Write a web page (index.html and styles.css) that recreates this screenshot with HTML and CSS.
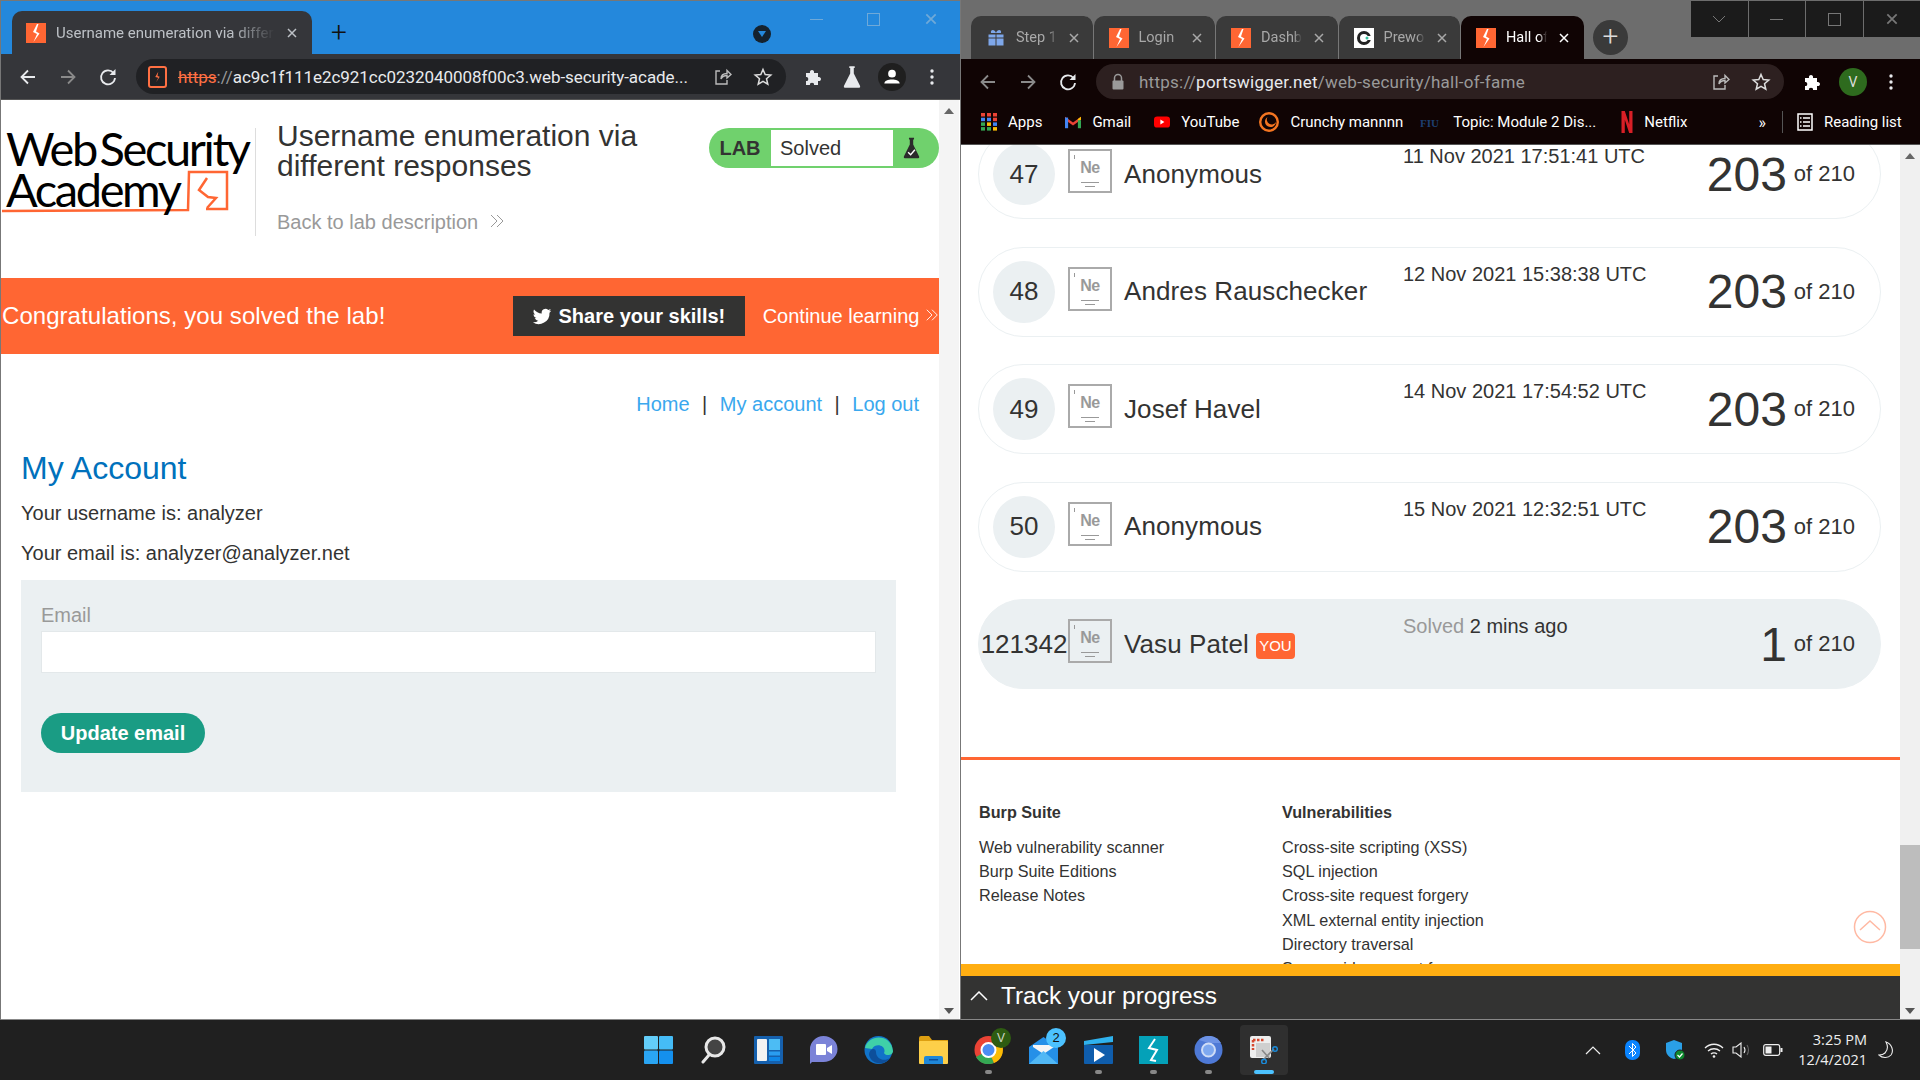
FILE: index.html
```html
<!DOCTYPE html>
<html lang="en">
<head>
    <meta charset="UTF-8">
    <title>Hall of Fame</title>
    <link rel="stylesheet" href="styles.css">
</head>
<body>
    <svg class="defs" width="0" height="0">
        <symbol id="burp" viewBox="0 0 20 20"><rect width="20" height="20" fill="#ff6633"/><path d="M11 1 L7 9 L11 11 L7.5 19 L13.5 10.5 L10 8.5 L12.5 1z" fill="#fff"/></symbol>
        <symbol id="star" viewBox="0 0 20 20"><path d="M10 2.5 L12.2 7.6 L17.8 8.1 L13.5 11.8 L14.8 17.2 L10 14.4 L5.2 17.2 L6.5 11.8 L2.2 8.1 L7.8 7.6z" fill="none" stroke="currentColor" stroke-width="1.5"/></symbol>
        <symbol id="share" viewBox="0 0 20 20"><path d="M8 4 H4 V17 H15 V13 M9 12 C9 8 12 6.500 15 6.500 V3.500 L19 7.500 L15 11 V8.500 C12 8.500 10 10 9 12z" fill="none" stroke="currentColor" stroke-width="1.400"/></symbol>
        <symbol id="puzzle" viewBox="0 0 20 20"><path d="M3 6 H7 C6 2 12 2 11 6 H15 V10 C19 9 19 15 15 14 V18 H11 C12 15 6 15 7 18 H3 V14 C6 15 6 9 3 10z" fill="currentColor"/></symbol>
        <symbol id="back" viewBox="0 0 20 20"><path d="M17 10 H4 M10 3.500 L3.500 10 L10 16.500" fill="none" stroke="currentColor" stroke-width="1.800"/></symbol>
        <symbol id="fwd" viewBox="0 0 20 20"><path d="M3 10 H16 M10 3.500 L16.500 10 L10 16.500" fill="none" stroke="currentColor" stroke-width="1.800"/></symbol>
        <symbol id="reload" viewBox="0 0 20 20"><path d="M15.500 6 A7 7 0 1 0 17 11" fill="none" stroke="currentColor" stroke-width="1.800"/><path d="M17.500 2 V8 H11.500z" fill="currentColor"/></symbol>
        <symbol id="dots" viewBox="0 0 20 20"><circle cx="10" cy="4" r="1.700" fill="currentColor"/><circle cx="10" cy="10" r="1.700" fill="currentColor"/><circle cx="10" cy="16" r="1.700" fill="currentColor"/></symbol>
        <symbol id="xmark" viewBox="0 0 12 12"><path d="M2 2 L10 10 M10 2 L2 10" fill="none" stroke="currentColor" stroke-width="1.500"/></symbol>
        <symbol id="chev2" viewBox="0 0 16 16"><path d="M2 2 L8 8 L2 14 M8 2 L14 8 L8 14" fill="none" stroke="currentColor" stroke-width="1"/></symbol>
        <symbol id="flask" viewBox="0 0 20 26"><path d="M7 1 H13 V3 H12 V9 L19 23 Q19.500 25 18 25 H2 Q0.500 25 1 23 L8 9 V3 H7z" fill="currentColor"/></symbol>
    </svg>

    <div class="desktop">
        <!-- left window -->
        <section class="window window-left">
            <div class="tabstrip tabstrip-left">
                <div class="tab tab-main">
                    <svg class="fav"><use href="#burp"/></svg>
                    <span class="tab-title">Username enumeration via differ</span>
                    <svg class="tab-x"><use href="#xmark"/></svg>
                </div>
                <span class="newtab-plain">+</span>
                <span class="profile-drop"><i></i></span>
                <div class="winctl winctl-left">
                    <span class="ctl-min"></span>
                    <span class="ctl-max"></span>
                    <svg class="ctl-x"><use href="#xmark"/></svg>
                </div>
            </div>
            <div class="toolbar toolbar-left">
                <svg class="tb-icon"><use href="#back"/></svg>
                <svg class="tb-icon dim"><use href="#fwd"/></svg>
                <svg class="tb-icon"><use href="#reload"/></svg>
                <div class="omnibox omnibox-left">
                    <span class="warn-box"><svg viewBox="0 0 20 20"><path d="M11 3 L7 10 L11 11 L8 17 L13 9.500 L10 8.500z" fill="#ff7043"/></svg></span>
                    <span class="url"><s class="url-bad">https</s><span class="dim-text">://</span>ac9c1f111e2c921cc0232040008f00c3.web-security-acade...</span>
                    <svg class="tb-icon omni-share"><use href="#share"/></svg>
                    <svg class="tb-icon omni-star"><use href="#star"/></svg>
                </div>
                <svg class="tb-icon ext"><use href="#puzzle"/></svg>
                <svg class="tb-icon flask-tb"><use href="#flask"/></svg>
                <span class="user-dot"><svg viewBox="0 0 20 20"><circle cx="10" cy="7" r="3.500" fill="#fff"/><path d="M3 16 C3 11 17 11 17 16z" fill="#fff"/></svg></span>
                <svg class="tb-icon menu-dots"><use href="#dots"/></svg>
            </div>
            <div class="viewport viewport-left">
                <div class="page-left">
                    <header class="lab-head">
                        <div class="logo">
                            <svg class="logo-mark" viewBox="0 0 232 48"><path d="M1 43 L187 42 L188 4 H226 V41 H205" fill="none" stroke="#ff6633" stroke-width="2.500"/><path d="M206 10 L198 22 L207 29 L215 30 L206 40" fill="none" stroke="#ff6633" stroke-width="2.500"/></svg>
                            <div class="logo-line">Web Security</div>
                            <div class="logo-line">Academy</div>
                        </div>
                        <div class="lab-title">
                            <h2>Username enumeration via different responses</h2>
                            <a class="back-link">Back to lab description <svg><use href="#chev2"/></svg></a>
                        </div>
                        <div class="lab-status">
                            <span class="lab-tag">LAB</span>
                            <span class="lab-word">Solved</span>
                            <span class="lab-flask"><svg viewBox="0 0 20 26"><use href="#flask" color="#2b2b2b"/><path d="M6 18 L9 21 L14 15" fill="none" stroke="#fff" stroke-width="1.600"/></svg></span>
                        </div>
                    </header>
                    <div class="congrats">
                        <span class="congrats-text">Congratulations, you solved the lab!</span>
                        <a class="share-btn"><svg viewBox="0 0 24 24"><path d="M23 5.500c-.8.4-1.700.6-2.600.7 1-.6 1.700-1.500 2-2.500-.9.500-1.900.9-2.900 1.100a4.600 4.600 0 0 0-7.800 4.200C8 8.800 4.600 7 2.400 4.200 1.200 6.300 1.800 9 3.800 10.300c-.7 0-1.400-.2-2-.5 0 2.200 1.500 4.100 3.600 4.600-.7.200-1.400.2-2.100.1.600 1.800 2.300 3.100 4.300 3.200A9.300 9.300 0 0 1 1 19.600 13 13 0 0 0 21 8c.9-.7 1.500-1.500 2-2.500z" fill="#fff"/></svg>Share your skills!</a>
                        <a class="continue">Continue learning <svg><use href="#chev2"/></svg></a>
                    </div>
                    <nav class="acct-nav"><a>Home</a><span>|</span><a>My account</a><span>|</span><a>Log out</a></nav>
                    <main class="acct">
                        <h1>My Account</h1>
                        <p>Your username is: analyzer</p>
                        <p>Your email is: analyzer@analyzer.net</p>
                        <form class="email-form">
                            <label for="email">Email</label>
                            <input type="text" id="email">
                            <button type="button">Update email</button>
                        </form>
                    </main>
                </div>
                <div class="scrollbar sb-left">
                    <i class="arrow-up"></i>
                    <i class="arrow-down"></i>
                </div>
            </div>
        </section>

        <!-- right window -->
        <section class="window window-right">
            <div class="tabstrip tabstrip-right">
                <div class="tab tab-bg">
                    <svg class="fav" viewBox="0 0 20 20"><path d="M2 6 H18 V18 H2z M2 10 H18 M10 6 V18" fill="#7ea7ea" stroke="#3b3b3b" stroke-width="1"/><path d="M5 5 C4 1 9 1 10 5 C11 1 16 1 15 5z" fill="#7ea7ea"/></svg>
                    <span class="tab-title">Step 1</span>
                    <svg class="tab-x"><use href="#xmark"/></svg>
                </div>
                <div class="tab tab-bg">
                    <svg class="fav"><use href="#burp"/></svg>
                    <span class="tab-title">Login</span>
                    <svg class="tab-x"><use href="#xmark"/></svg>
                </div>
                <div class="tab tab-bg">
                    <svg class="fav"><use href="#burp"/></svg>
                    <span class="tab-title">Dashb</span>
                    <svg class="tab-x"><use href="#xmark"/></svg>
                </div>
                <div class="tab tab-bg">
                    <svg class="fav" viewBox="0 0 20 20"><rect width="20" height="20" fill="#fff"/><circle cx="10" cy="10" r="5.500" fill="none" stroke="#222" stroke-width="3"/><rect x="12" y="8" width="5" height="4" fill="#fff"/><circle cx="13" cy="10" r="1.500" fill="#35c4a0"/></svg>
                    <span class="tab-title">Prewo</span>
                    <svg class="tab-x"><use href="#xmark"/></svg>
                </div>
                <div class="tab tab-active">
                    <svg class="fav"><use href="#burp"/></svg>
                    <span class="tab-title">Hall of</span>
                    <svg class="tab-x"><use href="#xmark"/></svg>
                </div>
                <span class="newtab-round">+</span>
                <div class="winctl winctl-right">
                    <span class="ctl-cell"><svg width="14" height="8" viewBox="0 0 14 8"><path d="M1 1 L7 7 L13 1" fill="none" stroke="#777" stroke-width="1"/></svg></span>
                    <span class="ctl-cell"><span class="ctl-min"></span></span>
                    <span class="ctl-cell"><span class="ctl-max"></span></span>
                    <span class="ctl-cell"><svg class="ctl-x"><use href="#xmark"/></svg></span>
                </div>
            </div>
            <div class="toolbar toolbar-right">
                <svg class="tb-icon dim"><use href="#back"/></svg>
                <svg class="tb-icon dim"><use href="#fwd"/></svg>
                <svg class="tb-icon"><use href="#reload"/></svg>
                <div class="omnibox omnibox-right">
                    <svg class="lock" viewBox="0 0 14 18"><path d="M3.500 8 V5 A3.500 3.500 0 0 1 10.500 5 V8" fill="none" stroke="#9a9a9a" stroke-width="1.500"/><rect x="1.500" y="7.500" width="11" height="9" rx="1" fill="#9a9a9a"/></svg>
                    <span class="url"><span class="dim-text">https://</span>portswigger.net<span class="dim-text">/web-security/hall-of-fame</span></span>
                    <svg class="tb-icon omni-share"><use href="#share"/></svg>
                    <svg class="tb-icon omni-star"><use href="#star"/></svg>
                </div>
                <svg class="tb-icon ext ext-white"><use href="#puzzle"/></svg>
                <span class="user-v">V</span>
                <svg class="tb-icon menu-dots"><use href="#dots"/></svg>
            </div>
            <div class="bookmarks">
                <a class="bm bm-apps"><svg viewBox="0 0 16 18"><rect x="0" y="0" width="4" height="3.500" fill="#ea4335"/><rect x="6" y="0" width="4" height="3.500" fill="#ea4335"/><rect x="12" y="0" width="4" height="3.500" fill="#ea4335"/><rect x="0" y="4.700" width="4" height="3.500" fill="#4285f4"/><rect x="6" y="4.700" width="4" height="3.500" fill="#4285f4"/><rect x="12" y="4.700" width="4" height="3.500" fill="#ea4335"/><rect x="0" y="9.400" width="4" height="3.500" fill="#34a853"/><rect x="6" y="9.400" width="4" height="3.500" fill="#fbbc05"/><rect x="12" y="9.400" width="4" height="3.500" fill="#4285f4"/><rect x="0" y="14.100" width="4" height="3.500" fill="#34a853"/><rect x="6" y="14.100" width="4" height="3.500" fill="#34a853"/><rect x="12" y="14.100" width="4" height="3.500" fill="#fbbc05"/></svg>Apps</a>
                <a class="bm bm-gmail"><svg viewBox="0 0 18 16"><path d="M0 2 L9 8.500 L18 2 V5.500 L9 12 L0 5.500z" fill="#ea4335"/><path d="M14.500 4.500 L18 2 V5.500 L14.500 8z" fill="#fbbc05"/><rect x="0" y="3" width="3.500" height="12" fill="#4285f4"/><rect x="14.500" y="6" width="3.500" height="9" fill="#34a853"/></svg>Gmail</a>
                <a class="bm bm-yt"><svg viewBox="0 0 20 16"><rect y="1" width="20" height="14" rx="4" fill="#f00"/><path d="M8 5 L13 8 L8 11z" fill="#fff"/></svg>YouTube</a>
                <a class="bm bm-cr"><svg viewBox="0 0 20 20"><circle cx="10" cy="10" r="8.800" fill="none" stroke="#f47521" stroke-width="2.400"/><path d="M8.500 5 A5.500 5.500 0 1 0 17 10 A3.500 3.500 0 1 1 8.500 5z" fill="#f47521"/></svg>Crunchy mannnn</a>
                <a class="bm bm-fiu"><svg viewBox="0 0 22 12"><text x="0" y="11" class="fiu-text">FIU</text></svg>Topic: Module 2 Dis...</a>
                <a class="bm bm-nf"><svg viewBox="0 0 10 20"><path d="M0 0 H3 L7 12 V0 H10 V20 H7 L3 8 V20 H0z" fill="#d81f26"/></svg>Netflix</a>
                <span class="bm-more">»</span>
                <span class="bm-sep"></span>
                <a class="bm bm-read"><svg viewBox="0 0 16 18"><rect x="1" y="1" width="14" height="16" fill="none" stroke="#fff" stroke-width="1.500"/><path d="M6 5 H13 M6 9 H13 M6 13 H13 M3 5 H4.500 M3 9 H4.500 M3 13 H4.500" stroke="#fff" stroke-width="1.500"/></svg>Reading list</a>
            </div>
            <div class="viewport viewport-right">
                <div class="page-right">
                    <div class="rows">
                        <div class="row">
                            <span class="rank">47</span>
                            <span class="avatar"><b>Ne</b></span>
                            <span class="name">Anonymous</span>
                            <span class="date">11 Nov 2021 17:51:41 UTC</span>
                            <span class="score"><b>203</b> of 210</span>
                        </div>
                        <div class="row">
                            <span class="rank">48</span>
                            <span class="avatar"><b>Ne</b></span>
                            <span class="name">Andres Rauschecker</span>
                            <span class="date">12 Nov 2021 15:38:38 UTC</span>
                            <span class="score"><b>203</b> of 210</span>
                        </div>
                        <div class="row">
                            <span class="rank">49</span>
                            <span class="avatar"><b>Ne</b></span>
                            <span class="name">Josef Havel</span>
                            <span class="date">14 Nov 2021 17:54:52 UTC</span>
                            <span class="score"><b>203</b> of 210</span>
                        </div>
                        <div class="row">
                            <span class="rank">50</span>
                            <span class="avatar"><b>Ne</b></span>
                            <span class="name">Anonymous</span>
                            <span class="date">15 Nov 2021 12:32:51 UTC</span>
                            <span class="score"><b>203</b> of 210</span>
                        </div>
                        <div class="row row-you">
                            <span class="rank">121342</span>
                            <span class="avatar"><b>Ne</b></span>
                            <span class="name">Vasu Patel <em>YOU</em></span>
                            <span class="date"><span class="solved">Solved</span> 2 mins ago</span>
                            <span class="score"><b>1</b> of 210</span>
                        </div>
                    </div>
                    <footer class="site-foot">
                        <div class="foot-col">
                            <h4>Burp Suite</h4>
                            <a>Web vulnerability scanner</a>
                            <a>Burp Suite Editions</a>
                            <a>Release Notes</a>
                        </div>
                        <div class="foot-col">
                            <h4>Vulnerabilities</h4>
                            <a>Cross-site scripting (XSS)</a>
                            <a>SQL injection</a>
                            <a>Cross-site request forgery</a>
                            <a>XML external entity injection</a>
                            <a>Directory traversal</a>
                            <a>Server-side request forgery</a>
                        </div>
                        <svg class="to-top" viewBox="0 0 34 34"><circle cx="17" cy="17" r="15.500" fill="none" stroke="#ffb9a3" stroke-width="1.500"/><path d="M7 20 L17 11 L27 20" fill="none" stroke="#ffb9a3" stroke-width="1.500"/></svg>
                    </footer>
                    <div class="track-bar">
                        <svg viewBox="0 0 18 10"><path d="M1 9 L9 1 L17 9" fill="none" stroke="#fff" stroke-width="1.500"/></svg>
                        <span>Track your progress</span>
                    </div>
                </div>
                <div class="scrollbar sb-right">
                    <i class="arrow-up"></i>
                    <span class="sb-thumb"></span>
                    <i class="arrow-down"></i>
                </div>
            </div>
        </section>
    </div>

    <!-- taskbar -->
    <div class="taskbar">
        <div class="task-icons">
            <span class="task"><svg viewBox="0 0 29 28"><rect x="0" y="0" width="14" height="13.500" rx="1" fill="#63cdf9"/><rect x="15" y="0" width="14" height="13.500" rx="1" fill="#45bcf7"/><rect x="0" y="14.500" width="14" height="13.500" rx="1" fill="#2aa5f3"/><rect x="15" y="14.500" width="14" height="13.500" rx="1" fill="#1490ee"/></svg></span>
            <span class="task"><svg viewBox="0 0 29 28"><circle cx="16" cy="11" r="9" fill="#444" stroke="#e8e8e8" stroke-width="3"/><path d="M10 19 L4 26" stroke="#e8e8e8" stroke-width="3" stroke-linecap="round"/></svg></span>
            <span class="task"><svg viewBox="0 0 29 28"><rect width="29" height="28" rx="1" fill="#1560ad"/><rect x="3" y="3" width="10" height="22" rx="1" fill="#f2f2f2"/><rect x="15" y="3" width="11" height="11" fill="#4cbcf4"/><rect x="15" y="15.500" width="11" height="4" fill="#2a9df0"/><rect x="15" y="21" width="11" height="4" fill="#0f86e6"/></svg></span>
            <span class="task"><svg viewBox="0 0 29 28"><path d="M14.500 0 A14 13 0 0 1 14.500 26 H3 L1 28 V13 A14 13 0 0 1 14.500 0z" fill="#7b83d8"/><rect x="7" y="8" width="10" height="11" rx="1" fill="#fff"/><path d="M18 12 L23 9 V18 L18 15z" fill="#fff"/></svg></span>
            <span class="task"><svg viewBox="0 0 29 28"><circle cx="14.500" cy="14" r="14" fill="#1173c9"/><path d="M1 12 C4 -2 27 -3 29 15 C29 20 21 20 20 17 C23 10 12 6 8 13z" fill="#3fd0a8"/><path d="M12 16 C12 23 20 26 26 22 C22 29 8 30 5 19 C5 12 12 11 12 16z" fill="#0d4f9b"/></svg></span>
            <span class="task"><svg viewBox="0 0 29 28"><path d="M0 2 Q0 0 2 0 H10 L13 4 H29 V12 H0z" fill="#dd9f11"/><rect y="5" width="29" height="23" rx="1" fill="#fdcf49"/><path d="M5 28 V22 Q5 20 7 20 H22 Q24 20 24 22 V28z" fill="#1f87d8"/><rect x="10" y="23" width="9" height="1.500" fill="#0d4f9b"/></svg></span>
            <span class="task has-dot"><svg viewBox="0 0 29 28"><circle cx="14.500" cy="14" r="14" fill="#ea4335"/><path d="M14.500 14 L2 21 A14 14 0 0 0 20 27z" fill="#34a853"/><path d="M14.500 14 L20 27 A14 14 0 0 0 28 9 Z" fill="#fbbc05"/><circle cx="14.500" cy="14" r="7" fill="#4b8df3" stroke="#fff" stroke-width="2"/></svg><i class="task-v">V</i></span>
            <span class="task"><svg viewBox="0 0 29 28"><path d="M0 11 L14.500 1 L29 11 V28 H0z" fill="#2590e8"/><path d="M4 9 H25 V11 L14.500 18 L4 11z" fill="#f5f5f5"/><path d="M0 28 L14.500 15 L29 28z" fill="#51b8f5"/></svg><i class="task-num">2</i></span>
            <span class="task has-dot"><svg viewBox="0 0 29 28"><path d="M0 9 H29 V27 Q29 28 28 28 H1 Q0 28 0 27z" fill="#0f5dac"/><path d="M0 5 L29 0 V6 L0 9z" fill="#2fb2ee"/><path d="M10 12 L21 19 L10 26z" fill="#fff"/></svg></span>
            <span class="task has-dot"><svg viewBox="0 0 29 28"><rect width="29" height="28" fill="#04a1b8"/><path d="M16 3 L10 12 L18 14 L12 24 L17 25" fill="none" stroke="#fff" stroke-width="2"/></svg></span>
            <span class="task has-dot"><svg viewBox="0 0 29 28"><circle cx="14.500" cy="14" r="14" fill="#4e79d6"/><path d="M14.500 7 H27 A14 14 0 0 0 5 4z" fill="#6d92e4"/><circle cx="14.500" cy="14" r="6.500" fill="#7ea8f0" stroke="#cfdcf6" stroke-width="2"/></svg></span>
            <span class="task task-on"><svg viewBox="0 0 29 28"><rect x="1" y="0" width="21" height="22" rx="2" fill="#eee"/><path d="M4 4 H15 M4 4 V14" stroke="#d7482f" stroke-width="2.500" stroke-dasharray="2.500 1.500" fill="none"/><rect x="7" y="7" width="14" height="14" fill="#cfcfcf"/><path d="M13 14 L20 22 M25 13 L14 24" stroke="#888" stroke-width="1.600"/><circle cx="26" cy="13" r="2.300" fill="none" stroke="#1b8ad8" stroke-width="1.500"/><circle cx="15" cy="25.500" r="2.300" fill="none" stroke="#1b8ad8" stroke-width="1.500"/></svg></span>
        </div>
        <div class="tray">
            <svg class="tray-chev" viewBox="0 0 16 9"><path d="M1 8 L8 1 L15 8" fill="none" stroke="#eee" stroke-width="1.200"/></svg>
            <svg class="tray-bt" viewBox="0 0 15 20"><rect width="15" height="20" rx="7" fill="#0a84ff"/><path d="M4 6 L11 13 L7.500 16.500 V3.500 L11 7 L4 14" fill="none" stroke="#fff" stroke-width="1"/></svg>
            <svg class="tray-shield" viewBox="0 0 20 20"><path d="M8 0 L16 3 V10 C16 15 12 18 8 19 C4 18 0 15 0 10 V3z" fill="#2a9fe6"/><circle cx="14" cy="15" r="5" fill="#0e8a2e" stroke="#202020" stroke-width="1"/><path d="M11.500 15 L13.500 17 L16.500 13.500" fill="none" stroke="#fff" stroke-width="1.200"/></svg>
            <svg class="tray-wifi" viewBox="0 0 20 15"><path d="M1 5 C6 0 14 0 19 5 M4 8 C7.500 5 12.500 5 16 8 M7 11 C8.500 9.500 11.500 9.500 13 11" fill="none" stroke="#eee" stroke-width="1.300"/><circle cx="10" cy="13.500" r="1.300" fill="#eee"/></svg>
            <svg class="tray-vol" viewBox="0 0 20 16"><path d="M1 5 H4 L9 1 V15 L4 11 H1z" fill="none" stroke="#eee" stroke-width="1.100"/><path d="M12 5 Q14 8 12 11" fill="none" stroke="#eee" stroke-width="1.100"/><path d="M15 3 Q18 8 15 13" fill="none" stroke="#666" stroke-width="1.100"/></svg>
            <svg class="tray-bat" viewBox="0 0 20 12"><rect x="0.700" y="0.700" width="16" height="10.600" rx="2" fill="none" stroke="#eee" stroke-width="1.200"/><rect x="2.500" y="2.500" width="6" height="7" fill="#eee"/><rect x="17.500" y="4" width="2" height="4" fill="#eee"/></svg>
            <div class="clock"><div>3:25 PM</div><div>12/4/2021</div></div>
            <svg class="tray-moon" viewBox="0 0 16 18"><path d="M8 1 C10 5 10 9 7 12 C5 14 3 14 1 14 C4 17 10 17.500 13 14 C16 10 14 3 8 1z" fill="none" stroke="#eee" stroke-width="1.100"/></svg>
        </div>
    </div>
</body>
</html>
```

FILE: styles.css
```css
* {
    box-sizing: border-box;
}
html, body {
    margin: 0;
    padding: 0;
    height: 1080px;
    overflow: hidden;
}
body {
    font-family: "Liberation Sans", Arial, sans-serif;
    display: flex;
    flex-direction: column;
    background-color: #202020;
    color: #333332;
}
a {
    color: inherit;
}
.defs {
    position: absolute;
}
.desktop {
    display: flex;
    height: 1020px;
}
.window {
    width: 960px;
    display: flex;
    flex-direction: column;
    font-family: Roboto, "Liberation Sans", sans-serif;
}
.window-left {
    border-left: 1px solid #777;
    border-top: 1px solid #777;
}
.window-right {
    border-left: 1px solid #777;
}

/* tab strips */
.tabstrip {
    display: flex;
    align-items: flex-end;
    flex: none;
}
.tabstrip-left {
    height: 53px;
    background-color: #2488dc;
    padding-left: 11px;
}
.tabstrip-right {
    height: 59px;
    background-color: #6d6d6d;
    padding-left: 10px;
}
.tab {
    display: flex;
    align-items: center;
    height: 43px;
    border-radius: 10px 10px 0 0;
    color: #bdc1c6;
    font-size: 14.500px;
}
.tab-main {
    width: 300px;
    background-color: #35363a;
    padding-left: 14px;
    font-size: 15px;
}
.tab-main .tab-title {
    width: 219px;
}
.tab-bg {
    width: 122.500px;
    background-color: #3a3a3a;
    padding-left: 15px;
    color: #a8a8a8;
    border-right: 1px solid #777;
}
.tab-active {
    width: 123px;
    background-color: #100404;
    padding-left: 15px;
    color: #fff;
}
.fav {
    width: 20px;
    height: 20px;
    flex: none;
    margin-right: 10px;
}
.tab-title {
    width: 41px;
    white-space: nowrap;
    overflow: hidden;
    -webkit-mask-image: linear-gradient(90deg, #000 80%, transparent);
    mask-image: linear-gradient(90deg, #000 80%, transparent);
}
.tab-x {
    width: 12px;
    height: 12px;
    margin-left: 11px;
    flex: none;
}
.newtab-plain {
    color: #111;
    font-size: 28px;
    font-weight: 300;
    margin: 0 0 4px 19px;
    line-height: 34px;
}
.newtab-round {
    width: 35px;
    height: 35px;
    border-radius: 50%;
    background-color: #3a3a3a;
    color: #ddd;
    font-size: 28px;
    font-weight: 300;
    line-height: 33px;
    text-align: center;
    margin: 0 0 4px 9px;
}
.profile-drop {
    width: 18px;
    height: 18px;
    border-radius: 50%;
    background-color: #15222e;
    margin: 0 0 11px 406px;
    display: flex;
    align-items: center;
    justify-content: center;
}
.profile-drop i {
    border: 4px solid transparent;
    border-top: 6px solid #2488dc;
    border-bottom: 0;
}
.winctl {
    display: flex;
    align-items: center;
}
.winctl-left {
    align-self: flex-start;
    height: 36px;
    margin-left: 39px;
    gap: 44px;
    color: #5ba6e6;
}
.ctl-min {
    display: block;
    width: 13px;
    height: 1px;
    background-color: #6fa9d8;
}
.ctl-max {
    display: block;
    width: 13px;
    height: 13px;
    border: 1px solid #6fa9d8;
}
.ctl-x {
    width: 14px;
    height: 14px;
    color: #6fa9d8;
}
.winctl-right {
    align-self: flex-start;
    margin-left: 63px;
    padding-top: 1px;
    gap: 1px;
    color: #777;
}
.winctl-right .ctl-min,
.winctl-right .ctl-max {
    background-color: transparent;
    border-color: #777;
}
.winctl-right .ctl-min {
    background-color: #777;
}
.winctl-right .ctl-x {
    color: #777;
}
.ctl-cell {
    width: 56.500px;
    height: 36px;
    background-color: #1b1b1b;
    display: flex;
    align-items: center;
    justify-content: center;
}

/* toolbars */
.toolbar {
    display: flex;
    align-items: center;
    flex: none;
    color: #e8eaed;
}
.toolbar-left {
    height: 46px;
    background-color: #35363a;
    padding-left: 17px;
    border-bottom: 1px solid #555;
}
.toolbar-right {
    height: 41px;
    background-color: #100404;
    padding: 4px 0 0 17px;
}
.tb-icon {
    width: 20px;
    height: 20px;
    flex: none;
    margin-right: 20px;
}
.dim {
    color: #8a8a8a;
}
.omnibox {
    display: flex;
    align-items: center;
    height: 35px;
    border-radius: 18px;
    font-size: 17px;
    color: #e8eaed;
    flex: none;
    margin-left: -2px;
}
.omnibox-left {
    width: 650px;
    background-color: #202124;
    padding-left: 12px;
}
.omnibox-right {
    width: 688px;
    background-color: #2d2020;
    padding-left: 15px;
}
.warn-box {
    width: 19px;
    height: 22px;
    border: 2px solid #ff7043;
    border-radius: 3px;
    margin-right: 11px;
    flex: none;
}
.warn-box svg {
    display: block;
    width: 15px;
    height: 18px;
}
.lock {
    width: 14px;
    height: 18px;
    margin-right: 14px;
    flex: none;
}
.url {
    white-space: nowrap;
    flex: 1;
}
.omnibox-left .url {
    letter-spacing: -0.05px;
}
.omnibox-right .url {
    letter-spacing: 0.25px;
}
.url-bad {
    color: #ff7043;
}
.dim-text {
    color: #9a9a9a;
}
.omni-share {
    color: #bbb;
    margin-right: 21px;
}
.omni-star {
    color: #ddd;
    margin-right: 13px;
}
.ext {
    margin-left: 17px;
}
.ext-white {
    color: #fff;
    margin-left: 18px;
}
.flask-tb {
    width: 18px;
    height: 24px;
}
.user-dot {
    width: 28px;
    height: 28px;
    border-radius: 50%;
    background-color: #1f1f1f;
    margin: 0 20px 0 -3px;
    padding: 3px;
    flex: none;
}
.user-dot svg {
    display: block;
}
.user-v {
    width: 28px;
    height: 28px;
    border-radius: 50%;
    background-color: #2e6b1e;
    color: #ddd;
    font-size: 14px;
    line-height: 28px;
    text-align: center;
    margin: 0 18px 0 -3px;
    flex: none;
}
.menu-dots {
    margin-right: 0;
    margin-left: -4px;
}

/* bookmarks */
.bookmarks {
    display: flex;
    align-items: center;
    height: 45px;
    flex: none;
    background-color: #100404;
    color: #fff;
    font-size: 15px;
    padding-left: 20px;
    border-bottom: 1px solid #555;
}
.bm {
    display: flex;
    align-items: center;
    white-space: nowrap;
    gap: 11px;
}
.bm svg {
    width: 16px;
    height: 18px;
    flex: none;
}
.bm-gmail {
    margin-left: 23px;
}
.bm-yt {
    margin-left: 23px;
}
.bm-cr {
    margin-left: 20px;
}
.bm-cr svg {
    width: 20px;
    height: 24px;
}
.bm-fiu {
    margin-left: 17px;
}
.fiu-text {
    font: bold 11px "Liberation Serif", serif;
    fill: #1d3f70;
}
.bm-fiu svg {
    width: 22px;
}
.bm-nf {
    margin-left: 25px;
}
.bm-nf svg {
    width: 12px;
    height: 22px;
}
.bm-more {
    margin-left: 71px;
    font-size: 16px;
}
.bm-sep {
    width: 1px;
    height: 22px;
    background-color: #555;
    margin-left: 16px;
}
.bm-read {
    margin-left: 14px;
}

/* scroll bars */
.viewport {
    flex: 1;
    display: flex;
    min-height: 0;
    background-color: #fff;
    border-bottom: 1px solid #888;
}
.scrollbar {
    width: 20px;
    flex: none;
    background-color: #f0f0f0;
    display: flex;
    flex-direction: column;
    align-items: center;
    justify-content: space-between;
    padding: 8px 0 5px;
    position: relative;
}
.sb-left {
    background-color: #f4f4f4;
}
.arrow-up {
    border: 5px solid transparent;
    border-bottom: 6px solid #666;
    border-top: 0;
}
.arrow-down {
    border: 5px solid transparent;
    border-top: 6px solid #555;
    border-bottom: 0;
}
.sb-thumb {
    position: absolute;
    left: 0;
    right: 0;
    top: 700px;
    height: 104px;
    background-color: #bdbdbd;
}

/* lab page */
.page-left {
    width: 938px;
    flex: none;
    font-family: "Liberation Sans", Arial, sans-serif;
}
.lab-head {
    display: flex;
    height: 178px;
    padding-top: 28px;
}
.logo {
    width: 255px;
    height: 108px;
    position: relative;
    border-right: 1px solid #ddd;
    color: #000;
    padding-left: 5px;
    flex: none;
    font-family: Lato, "Liberation Sans", sans-serif;
}
.logo-line {
    position: relative;
    font-size: 47px;
    line-height: 41px;
    letter-spacing: -2.4px;
    word-spacing: -6px;
    white-space: nowrap;
}
.logo-mark {
    position: absolute;
    left: 0;
    top: 40px;
    width: 232px;
    height: 48px;
}
.lab-title {
    width: 453px;
    padding-left: 21px;
    flex: none;
}
.lab-title h2 {
    margin: -7px 0 0;
    font-size: 30px;
    font-weight: 400;
    line-height: 30px;
    color: #333332;
}
.back-link {
    display: block;
    margin-top: 30px;
    font-size: 20px;
    color: #999;
}
.back-link svg {
    width: 16px;
    height: 16px;
    margin-left: 5px;
}
.lab-status {
    display: flex;
    width: 230px;
    height: 40px;
    border-radius: 20px;
    background-color: #70d16d;
    overflow: hidden;
    flex: none;
    align-items: stretch;
}
.lab-tag {
    width: 62px;
    line-height: 40px;
    font-weight: bold;
    font-size: 20px;
    text-align: center;
}
.lab-word {
    width: 122px;
    margin: 2px 0;
    background-color: #fff;
    font-size: 20px;
    line-height: 36px;
    padding-left: 9px;
}
.lab-flask {
    flex: 1;
    display: flex;
    align-items: center;
    justify-content: center;
    padding-right: 9px;
}
.lab-flask svg {
    width: 17px;
    height: 26px;
}
.congrats {
    display: flex;
    align-items: center;
    height: 76px;
    background-color: #ff6633;
    color: #fff;
    padding-left: 1px;
    white-space: nowrap;
}
.congrats-text {
    font-size: 24px;
    width: 512px;
    letter-spacing: 0.05px;
}
.share-btn {
    display: flex;
    align-items: center;
    justify-content: center;
    width: 232px;
    height: 40px;
    background-color: #333332;
    font-size: 20px;
    font-weight: bold;
}
.share-btn svg {
    width: 20px;
    height: 20px;
    margin-right: 6px;
}
.continue {
    margin-left: 18px;
    font-size: 20px;
}
.continue svg {
    width: 14px;
    height: 16px;
}
.acct-nav {
    display: flex;
    justify-content: flex-end;
    gap: 12.500px;
    padding: 38px 20px 0 0;
    font-size: 20px;
    line-height: 24px;
}
.acct-nav a {
    color: #3aa8ee;
}
.acct {
    padding: 0 43px 0 20px;
    font-size: 20px;
}
.acct h1 {
    margin: 32px 0 0;
    font-size: 32px;
    font-weight: 400;
    line-height: 40px;
    color: #0071bc;
}
.acct p {
    margin: 14px 0 0;
    line-height: 26px;
}
.acct h1 + p {
    margin-top: 12px;
}
.email-form {
    margin-top: 14px;
    height: 212px;
    padding: 22px 20px 0;
    background-color: #ebf0f2;
}
.email-form label {
    display: block;
    color: #999;
    line-height: 26px;
}
.email-form input {
    display: block;
    width: 100%;
    height: 42px;
    margin-top: 3px;
    background-color: #fff;
    border: 1px solid #e3e8ea;
}
.email-form button {
    display: block;
    width: 164px;
    height: 40px;
    margin-top: 40px;
    border: none;
    border-radius: 20px;
    background-color: #1a9c84;
    color: #fff;
    font: bold 20px "Liberation Sans", Arial, sans-serif;
}

/* hall of fame page */
.page-right {
    width: 939px;
    flex: none;
    display: flex;
    flex-direction: column;
    font-family: "Liberation Sans", Arial, sans-serif;
    overflow: hidden;
    position: relative;
}
.rows {
    display: flex;
    flex-direction: column;
    gap: 27.500px;
    margin: -16px 19px 0 17px;
    flex: none;
}
.row {
    display: flex;
    align-items: center;
    height: 90px;
    border: 1px solid #ebf0f2;
    border-radius: 45px;
    padding-left: 14px;
    flex: none;
}
.row-you {
    background-color: #ebf0f2;
}
.rank {
    width: 62px;
    height: 62px;
    border-radius: 50%;
    background-color: #ebf0f2;
    display: flex;
    align-items: center;
    justify-content: center;
    font-size: 26px;
    flex: none;
    margin-right: 13px;
}
.avatar {
    width: 44px;
    height: 44px;
    border: 2px solid #aaa;
    flex: none;
    margin: -6px 12px 0 0;
    position: relative;
    text-align: center;
    color: #999;
    font-size: 16px;
    line-height: 34px;
    background-color: #fff;
}
.row-you .avatar {
    background-color: transparent;
}
.avatar b {
    display: block;
    letter-spacing: -0.5px;
}
.avatar b::before {
    content: "";
    position: absolute;
    left: 4px;
    top: 4px;
    width: 1px;
    height: 4px;
    background-color: #999;
}
.avatar::before {
    content: "";
    position: absolute;
    left: 11px;
    right: 11px;
    top: 31px;
    height: 1px;
    background-color: #999;
}
.avatar::after {
    content: "";
    position: absolute;
    left: 15px;
    right: 15px;
    top: 35px;
    height: 1px;
    background-color: #999;
}
.name {
    width: 279px;
    flex: none;
    font-size: 26px;
    letter-spacing: 0.1px;
    white-space: nowrap;
}
.name em {
    display: inline-block;
    font-style: normal;
    font-size: 15px;
    background-color: #ff6633;
    color: #fff;
    border-radius: 4px;
    padding: 0 3px;
    line-height: 26px;
    letter-spacing: 0;
    vertical-align: 2px;
}
.date {
    align-self: flex-start;
    margin-top: 14px;
    font-size: 20px;
    line-height: 24px;
    white-space: nowrap;
}
.solved {
    color: #999;
}
.score {
    margin-left: auto;
    padding-right: 25px;
    font-size: 22px;
    white-space: nowrap;
    display: flex;
    align-items: center;
    gap: 7px;
}
.score b {
    font-size: 48px;
    font-weight: 400;
}
.site-foot {
    flex: 1;
    min-height: 0;
    margin-top: 68px;
    border-top: 3px solid #ff6633;
    display: flex;
    padding: 43px 0 0 18px;
    position: relative;
    overflow: hidden;
    font-size: 16.200px;
}
.foot-col {
    width: 303px;
    display: flex;
    flex-direction: column;
}
.foot-col h4 {
    margin: 0 0 13px;
    font-size: 16.200px;
    line-height: 19px;
}
.foot-col a {
    line-height: 24.200px;
    white-space: nowrap;
}
.to-top {
    position: absolute;
    right: 13px;
    top: 150px;
    width: 34px;
    height: 34px;
}
.track-bar {
    height: 55px;
    flex: none;
    background-color: #333332;
    border-top: 12px solid #ffae12;
    display: flex;
    align-items: center;
    color: #fff;
    font-size: 24.400px;
    padding: 0 0 3px 9px;
    gap: 13px;
}
.track-bar svg {
    width: 18px;
    height: 10px;
}

/* taskbar */
.taskbar {
    height: 60px;
    display: flex;
    align-items: center;
    background-color: #202020;
    color: #eee;
    padding-left: 631px;
}
.task-icons {
    display: flex;
}
.task {
    width: 55px;
    height: 28px;
    display: flex;
    justify-content: center;
    position: relative;
}
.task svg {
    width: 29px;
    height: 28px;
}
.has-dot::after {
    content: "";
    position: absolute;
    bottom: -10px;
    left: 24px;
    width: 7px;
    height: 4px;
    border-radius: 2px;
    background-color: #888;
}
.task-on::before {
    content: "";
    position: absolute;
    left: 4px;
    top: -11px;
    width: 48px;
    height: 50px;
    border-radius: 4px;
    background-color: #2f2f2f;
}
.task-on svg {
    position: relative;
}
.task-on::after {
    content: "";
    position: absolute;
    bottom: -10px;
    left: 18px;
    width: 20px;
    height: 4px;
    border-radius: 2px;
    background-color: #4cc2ff;
}
.task-v {
    position: absolute;
    top: -8px;
    left: 30px;
    width: 20px;
    height: 20px;
    border-radius: 50%;
    background-color: #2e5c12;
    color: #cfd8c8;
    font-style: normal;
    font-size: 12px;
    line-height: 20px;
    text-align: center;
}
.task-num {
    position: absolute;
    top: -8px;
    left: 30px;
    width: 20px;
    height: 20px;
    border-radius: 50%;
    background-color: #4cc2ff;
    color: #111;
    font-style: normal;
    font-size: 13px;
    line-height: 20px;
    text-align: center;
}
.tray {
    display: flex;
    align-items: center;
    margin-left: auto;
}
.tray-chev {
    width: 16px;
    height: 9px;
    margin-right: 24.500px;
}
.tray-bt {
    width: 15px;
    height: 20px;
    margin-right: 25.500px;
}
.tray-shield {
    width: 20px;
    height: 20px;
    margin-right: 18.500px;
}
.tray-wifi {
    width: 20px;
    height: 15px;
    margin-right: 8px;
}
.tray-vol {
    width: 20px;
    height: 16px;
    margin-right: 11px;
}
.tray-bat {
    width: 20px;
    height: 12px;
    margin-right: 12px;
}
.clock {
    width: 72px;
    text-align: right;
    font-family: "Open Sans", sans-serif;
    font-size: 14.500px;
    line-height: 20px;
    white-space: nowrap;
    margin-right: 11px;
}
.tray-moon {
    width: 16px;
    height: 18px;
    margin-right: 26px;
}
```
